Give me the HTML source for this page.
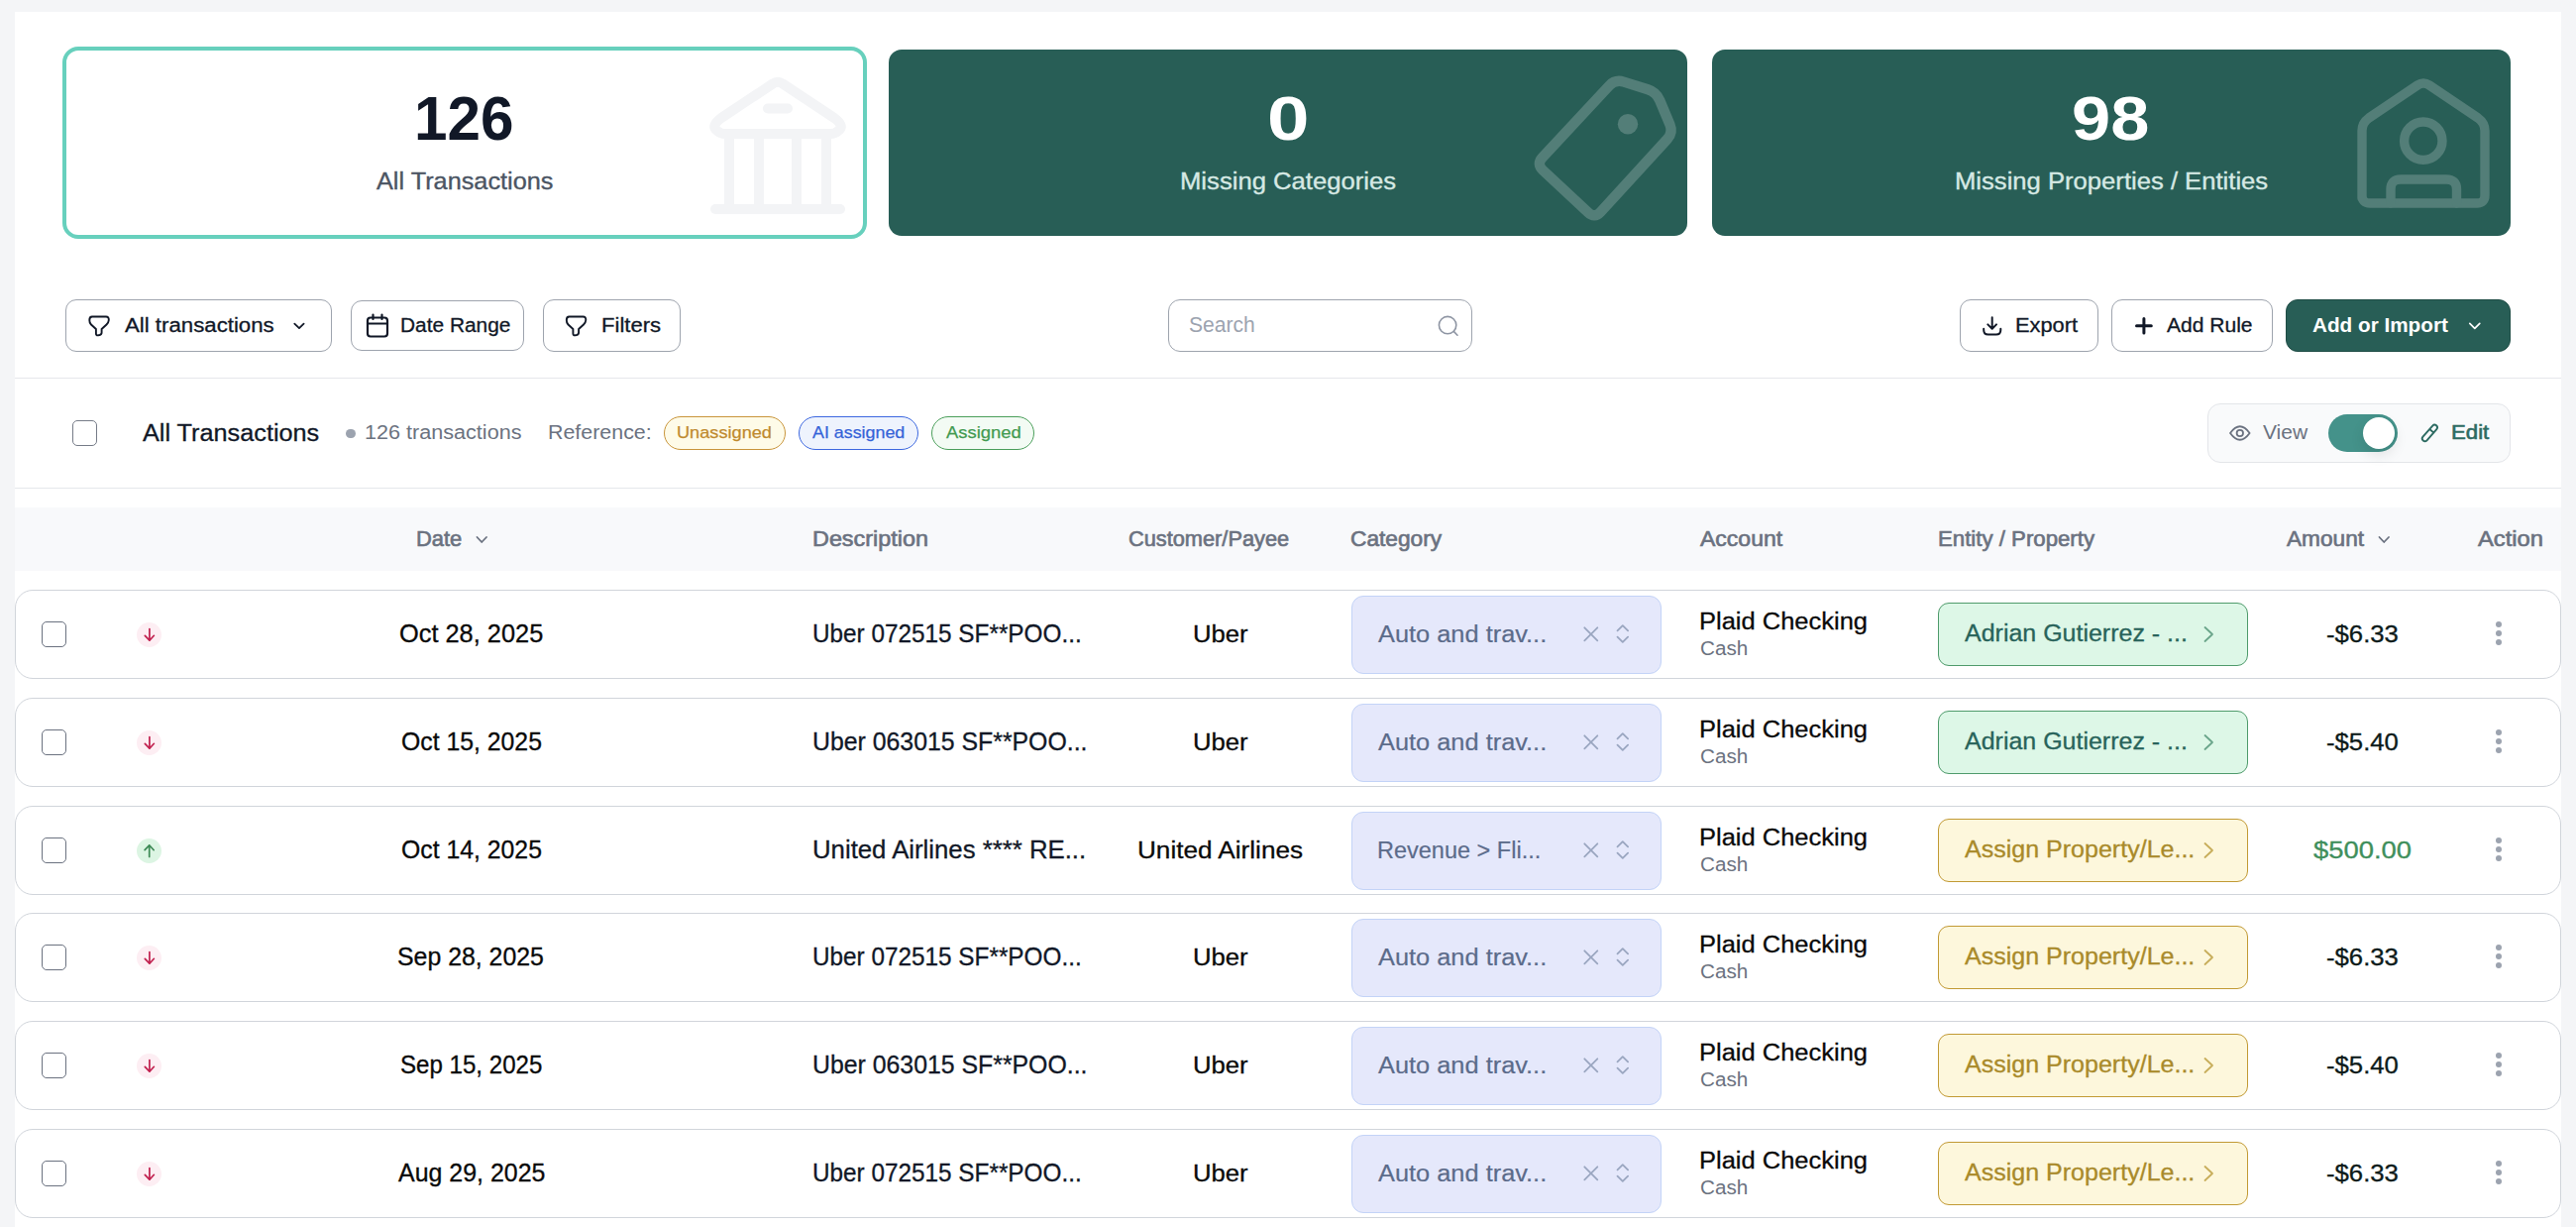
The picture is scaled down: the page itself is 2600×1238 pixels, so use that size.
<!DOCTYPE html>
<html><head><meta charset="utf-8"><title>Transactions</title>
<style>
html,body{margin:0;padding:0;width:2600px;height:1238px;overflow:hidden;background:#f4f5f7;font-family:"Liberation Sans",sans-serif}
.t{position:absolute;white-space:nowrap;transform-origin:0 0}
</style></head><body>
<div style="position:absolute;left:15px;top:12px;width:2570px;height:1226px;background:#fff"></div>
<div style="position:absolute;left:63px;top:47px;width:804px;height:186px;border:4px solid #67d0bd;border-radius:16px;background:#fff"></div>
<div style="position:absolute;left:897px;top:50px;width:806px;height:188px;border-radius:13px;background:#285e56"></div>
<div style="position:absolute;left:1728px;top:50px;width:806px;height:188px;border-radius:13px;background:#285e56"></div>
<svg style="position:absolute;left:0;top:0" width="2600" height="260" viewBox="0 0 2600 260">
<g fill="none" stroke-linecap="round" stroke-linejoin="round">
<g stroke="#f3f4f6" stroke-width="10">
<path d="M722,211 H848"/>
<path d="M736,140 V207 M766,140 V207 M804,140 V207 M834,140 V207"/>
<path d="M780,84.5 Q785,81 790,84.5 L842,119 Q853,127 846,132 Q843,135 838,135 H732 Q727,135 724,132 Q717,127 728,119 Z"/>
<path d="M775,109.5 H795"/>
</g>
<g stroke="#537e78" stroke-width="10.4">
<path d="M1556.8,158.9 L1624.2,86.5 Q1630.3,79.9 1638.9,82.6 L1663.2,90.2 Q1671.8,92.9 1675.2,101.2 L1685.4,125.5 Q1688.9,133.8 1682.8,140.4 L1615.4,213.9 Q1609.3,220.5 1602.8,214.3 L1557.2,171.7 Q1550.7,165.5 1556.8,158.9 Z"/>
<path d="M2384,200 V132 Q2384,124 2391,119 L2440,86 Q2446,82 2452,86 L2501,119 Q2508,124 2508,132 V197 Q2508,205 2500,205 H2392 Q2384,205 2384,197 Z" stroke-width="9.4"/>
<path d="M2413,205 V191 Q2413,181 2423,181 H2469 Q2479.5,181 2479.5,191 V205" stroke-width="9.4"/>
<circle cx="2445.8" cy="142.2" r="19.2" stroke-width="9.4"/>
</g>
<circle cx="1643" cy="125.3" r="10.2" fill="#537e78"/>
</g></svg>
<div style="position:absolute;box-sizing:border-box;border:1px solid #9ea4ae;border-radius:11px;background:#fff;left:66px;top:302px;width:269px;height:53px"></div>
<div style="position:absolute;box-sizing:border-box;border:1px solid #9ea4ae;border-radius:11px;background:#fff;left:354px;top:303px;width:175px;height:51px"></div>
<div style="position:absolute;box-sizing:border-box;border:1px solid #9ea4ae;border-radius:11px;background:#fff;left:548px;top:302px;width:139px;height:53px"></div>
<div style="position:absolute;box-sizing:border-box;border:1px solid #9ea4ae;border-radius:11px;background:#fff;left:1179px;top:302px;width:307px;height:53px;border-radius:12px"></div>
<div style="position:absolute;box-sizing:border-box;border:1px solid #9ea4ae;border-radius:11px;background:#fff;left:1978px;top:302px;width:140px;height:53px"></div>
<div style="position:absolute;box-sizing:border-box;border:1px solid #9ea4ae;border-radius:11px;background:#fff;left:2131px;top:302px;width:163px;height:53px"></div>
<div style="position:absolute;left:2307px;top:302px;width:227px;height:53px;border-radius:12px;background:#285e56;box-sizing:border-box;border:1px solid #1f4c45"></div>
<svg style="position:absolute;left:0;top:280px" width="2600" height="100" viewBox="0 280 2600 100">
<g fill="none" stroke-linecap="round" stroke-linejoin="round">
<g stroke="#111827" stroke-width="2.2">
<path d="M93,319.5 H107 Q110,319.5 109.8,323 Q109.6,325.5 107.5,327.5 L102.6,332 V335.5 Q102.6,337.5 100.5,338 L99,338.3 Q96.9,338.6 96.9,336.5 V332 L92,327.5 Q90.2,325.5 90.3,323 Q90.3,319.5 93,319.5 Z" stroke-width="1.9"/>
<path d="M297.3,326.6 L302,331.1 L306.6,326.6" stroke-width="1.8"/>
<rect x="371" y="320.5" width="20" height="19" rx="3"/>
<path d="M371,326.5 H391 M376.5,317.5 V322 M385.5,317.5 V322"/>
<g transform="translate(481.5,0)"><path d="M93,319.5 H107 Q110,319.5 109.8,323 Q109.6,325.5 107.5,327.5 L102.6,332 V335.5 Q102.6,337.5 100.5,338 L99,338.3 Q96.9,338.6 96.9,336.5 V332 L92,327.5 Q90.2,325.5 90.3,323 Q90.3,319.5 93,319.5 Z" stroke-width="1.9"/></g>
<path d="M2010.7,320.3 V331.6 M2006.3,327.4 L2010.7,331.8 L2015,327.4 M2002.2,331.7 V333 Q2002.2,337.6 2006.7,337.6 H2014.8 Q2019.3,337.6 2019.3,333 V331.7" stroke-width="2"/>
</g>
<path d="M2163.9,321.5 V336 M2156.5,328.7 H2171.3" stroke="#111827" stroke-width="3"/>
<path d="M2492.8,326.3 L2497.8,331.3 L2502.8,326.3" stroke="#ffffff" stroke-width="1.7"/>
<g stroke="#8e95a3" stroke-width="1.6">
<circle cx="1461.1" cy="328.1" r="8.7"/><path d="M1467.3,334.4 L1471,338.2"/>
</g>
</g></svg>
<div style="position:absolute;left:15px;top:381px;width:2570px;height:1px;background:#e5e7eb"></div>
<div style="position:absolute;left:15px;top:492px;width:2570px;height:1px;background:#e5e7eb"></div>
<div style="position:absolute;left:15px;top:512px;width:2570px;height:64px;background:#f8f9fb"></div>
<div style="position:absolute;box-sizing:border-box;left:73px;top:424px;width:25px;height:26px;border:1.5px solid #767c88;border-radius:5px"></div>
<div style="position:absolute;left:349px;top:432.5px;width:9.5px;height:9.5px;border-radius:50%;background:#9ca3af"></div>
<div style="position:absolute;box-sizing:border-box;border-radius:17px;border:1.5px solid;left:670px;top:420px;width:123px;height:34px;border-color:#c9953b;background:#fefbe8"></div>
<div style="position:absolute;box-sizing:border-box;border-radius:17px;border:1.5px solid;left:806px;top:420px;width:121px;height:34px;border-color:#3d68e0;background:#eef3fd"></div>
<div style="position:absolute;box-sizing:border-box;border-radius:17px;border:1.5px solid;left:940px;top:420px;width:104px;height:34px;border-color:#4b9f5b;background:#f3fbf4"></div>
<div style="position:absolute;box-sizing:border-box;left:2228px;top:407px;width:306px;height:60px;border:1px solid #e3e5e9;border-radius:13px;background:#f9fafb"></div>
<div style="position:absolute;left:2350px;top:418px;width:70px;height:38px;border-radius:19px;background:#44928a"></div>
<div style="position:absolute;left:2385px;top:421px;width:32px;height:32px;border-radius:50%;background:#fff;box-shadow:0 6px 14px rgba(0,0,0,0.10)"></div>
<svg style="position:absolute;left:2240px;top:415px" width="240" height="45" viewBox="2240 415 240 45">
<g fill="none" stroke-linecap="round" stroke-linejoin="round">
<path d="M2251,437 Q2260.8,423.5 2270.6,437 Q2260.8,450.5 2251,437 Z" stroke="#6b7280" stroke-width="1.8"/>
<circle cx="2260.8" cy="437" r="3.2" stroke="#6b7280" stroke-width="1.8"/>
<path d="M2449.53,444.28 L2459.33,433.08 A2.7,2.7 0 0 0 2455.27,429.52 L2445.47,440.72 A2.7,2.7 0 0 0 2449.53,444.28 Z M2452.3,433.0 L2456.4,436.6" stroke="#2d6b62" stroke-width="1.9"/>
</g></svg>
<svg style="position:absolute;left:470px;top:530px" width="1960" height="30" viewBox="470 530 1960 30">
<g fill="none" stroke="#6b7280" stroke-width="1.8" stroke-linecap="round" stroke-linejoin="round">
<path d="M481.5,542 L486.2,547 L491,542"/><path d="M2401.5,542 L2406.2,547 L2411,542"/>
</g></svg>
<div style="position:absolute;box-sizing:border-box;left:15px;top:595px;width:2570px;height:90px;border:1px solid #d1d5db;border-radius:18px;background:#fff"></div>
<div style="position:absolute;box-sizing:border-box;left:42px;top:627px;width:25px;height:26px;border:1.5px solid #6b7280;border-radius:5px"></div>
<div style="position:absolute;left:138px;top:627.5px;width:25px;height:25px;border-radius:50%;background:#fdeef3"></div>
<svg style="position:absolute;left:138px;top:627.5px" width="25" height="25" viewBox="0 0 25 25"><path d="M12.9,6.6 V18.2 M8.3,13.3 L12.9,18.2 L17.4,13.3" fill="none" stroke="#c1214f" stroke-width="1.7" stroke-linecap="round" stroke-linejoin="round"/></svg>
<div style="position:absolute;box-sizing:border-box;left:1364px;top:601px;width:313px;height:79px;border:1.5px solid #c3d3f7;border-radius:12px;background:#e5e8fb"></div>
<svg style="position:absolute;left:1590px;top:625px" width="60" height="30" viewBox="1590 625 60 30"><g fill="none" stroke-linecap="round" stroke-linejoin="round">
<path d="M1599.3,633.3 L1612.3,646.3 M1612.3,633.3 L1599.3,646.3" stroke="#9aa6c0" stroke-width="1.8"/>
<path d="M1632.5,636.4 L1637.8,631.1 L1643.1,636.4 M1632.5,642.6 L1637.8,647.9 L1643.1,642.6" stroke="#9aa6c0" stroke-width="1.8"/></g></svg>
<div style="position:absolute;box-sizing:border-box;left:1956px;top:608px;width:313px;height:64px;border:1.5px solid #4f9b6c;border-radius:11px;background:#ddf7e7"></div>
<svg style="position:absolute;left:2220px;top:628px" width="20" height="24" viewBox="2220 628 20 24"><path d="M2225.5,633 L2233,640 L2225.5,647" fill="none" stroke="#6aa58a" stroke-width="1.8" stroke-linecap="round" stroke-linejoin="round"/></svg>
<div style="position:absolute;left:2519px;top:626.5px;width:6px;height:6px;border-radius:50%;background:#9ca3af"></div>
<div style="position:absolute;left:2519px;top:635.9px;width:6px;height:6px;border-radius:50%;background:#9ca3af"></div>
<div style="position:absolute;left:2519px;top:645.4px;width:6px;height:6px;border-radius:50%;background:#9ca3af"></div>
<div style="position:absolute;box-sizing:border-box;left:15px;top:704px;width:2570px;height:90px;border:1px solid #d1d5db;border-radius:18px;background:#fff"></div>
<div style="position:absolute;box-sizing:border-box;left:42px;top:736px;width:25px;height:26px;border:1.5px solid #6b7280;border-radius:5px"></div>
<div style="position:absolute;left:138px;top:736.5px;width:25px;height:25px;border-radius:50%;background:#fdeef3"></div>
<svg style="position:absolute;left:138px;top:736.5px" width="25" height="25" viewBox="0 0 25 25"><path d="M12.9,6.6 V18.2 M8.3,13.3 L12.9,18.2 L17.4,13.3" fill="none" stroke="#c1214f" stroke-width="1.7" stroke-linecap="round" stroke-linejoin="round"/></svg>
<div style="position:absolute;box-sizing:border-box;left:1364px;top:710px;width:313px;height:79px;border:1.5px solid #c3d3f7;border-radius:12px;background:#e5e8fb"></div>
<svg style="position:absolute;left:1590px;top:734px" width="60" height="30" viewBox="1590 625 60 30"><g fill="none" stroke-linecap="round" stroke-linejoin="round">
<path d="M1599.3,633.3 L1612.3,646.3 M1612.3,633.3 L1599.3,646.3" stroke="#9aa6c0" stroke-width="1.8"/>
<path d="M1632.5,636.4 L1637.8,631.1 L1643.1,636.4 M1632.5,642.6 L1637.8,647.9 L1643.1,642.6" stroke="#9aa6c0" stroke-width="1.8"/></g></svg>
<div style="position:absolute;box-sizing:border-box;left:1956px;top:717px;width:313px;height:64px;border:1.5px solid #4f9b6c;border-radius:11px;background:#ddf7e7"></div>
<svg style="position:absolute;left:2220px;top:737px" width="20" height="24" viewBox="2220 628 20 24"><path d="M2225.5,633 L2233,640 L2225.5,647" fill="none" stroke="#6aa58a" stroke-width="1.8" stroke-linecap="round" stroke-linejoin="round"/></svg>
<div style="position:absolute;left:2519px;top:735.5px;width:6px;height:6px;border-radius:50%;background:#9ca3af"></div>
<div style="position:absolute;left:2519px;top:744.9px;width:6px;height:6px;border-radius:50%;background:#9ca3af"></div>
<div style="position:absolute;left:2519px;top:754.4px;width:6px;height:6px;border-radius:50%;background:#9ca3af"></div>
<div style="position:absolute;box-sizing:border-box;left:15px;top:813px;width:2570px;height:90px;border:1px solid #d1d5db;border-radius:18px;background:#fff"></div>
<div style="position:absolute;box-sizing:border-box;left:42px;top:845px;width:25px;height:26px;border:1.5px solid #6b7280;border-radius:5px"></div>
<div style="position:absolute;left:138px;top:845.5px;width:25px;height:25px;border-radius:50%;background:#dcf5e3"></div>
<svg style="position:absolute;left:138px;top:845.5px" width="25" height="25" viewBox="0 0 25 25"><path d="M12.7,18.4 V6.8 M8.1,11.7 L12.7,6.8 L17.2,11.7" fill="none" stroke="#3d8a55" stroke-width="1.7" stroke-linecap="round" stroke-linejoin="round"/></svg>
<div style="position:absolute;box-sizing:border-box;left:1364px;top:819px;width:313px;height:79px;border:1.5px solid #c3d3f7;border-radius:12px;background:#e5e8fb"></div>
<svg style="position:absolute;left:1590px;top:843px" width="60" height="30" viewBox="1590 625 60 30"><g fill="none" stroke-linecap="round" stroke-linejoin="round">
<path d="M1599.3,633.3 L1612.3,646.3 M1612.3,633.3 L1599.3,646.3" stroke="#9aa6c0" stroke-width="1.8"/>
<path d="M1632.5,636.4 L1637.8,631.1 L1643.1,636.4 M1632.5,642.6 L1637.8,647.9 L1643.1,642.6" stroke="#9aa6c0" stroke-width="1.8"/></g></svg>
<div style="position:absolute;box-sizing:border-box;left:1956px;top:826px;width:313px;height:64px;border:1.5px solid #c29a35;border-radius:11px;background:#fdf7dc"></div>
<svg style="position:absolute;left:2220px;top:846px" width="20" height="24" viewBox="2220 628 20 24"><path d="M2225.5,633 L2233,640 L2225.5,647" fill="none" stroke="#c7ad5a" stroke-width="1.8" stroke-linecap="round" stroke-linejoin="round"/></svg>
<div style="position:absolute;left:2519px;top:844.5px;width:6px;height:6px;border-radius:50%;background:#9ca3af"></div>
<div style="position:absolute;left:2519px;top:853.9px;width:6px;height:6px;border-radius:50%;background:#9ca3af"></div>
<div style="position:absolute;left:2519px;top:863.4px;width:6px;height:6px;border-radius:50%;background:#9ca3af"></div>
<div style="position:absolute;box-sizing:border-box;left:15px;top:921px;width:2570px;height:90px;border:1px solid #d1d5db;border-radius:18px;background:#fff"></div>
<div style="position:absolute;box-sizing:border-box;left:42px;top:953px;width:25px;height:26px;border:1.5px solid #6b7280;border-radius:5px"></div>
<div style="position:absolute;left:138px;top:953.5px;width:25px;height:25px;border-radius:50%;background:#fdeef3"></div>
<svg style="position:absolute;left:138px;top:953.5px" width="25" height="25" viewBox="0 0 25 25"><path d="M12.9,6.6 V18.2 M8.3,13.3 L12.9,18.2 L17.4,13.3" fill="none" stroke="#c1214f" stroke-width="1.7" stroke-linecap="round" stroke-linejoin="round"/></svg>
<div style="position:absolute;box-sizing:border-box;left:1364px;top:927px;width:313px;height:79px;border:1.5px solid #c3d3f7;border-radius:12px;background:#e5e8fb"></div>
<svg style="position:absolute;left:1590px;top:951px" width="60" height="30" viewBox="1590 625 60 30"><g fill="none" stroke-linecap="round" stroke-linejoin="round">
<path d="M1599.3,633.3 L1612.3,646.3 M1612.3,633.3 L1599.3,646.3" stroke="#9aa6c0" stroke-width="1.8"/>
<path d="M1632.5,636.4 L1637.8,631.1 L1643.1,636.4 M1632.5,642.6 L1637.8,647.9 L1643.1,642.6" stroke="#9aa6c0" stroke-width="1.8"/></g></svg>
<div style="position:absolute;box-sizing:border-box;left:1956px;top:934px;width:313px;height:64px;border:1.5px solid #c29a35;border-radius:11px;background:#fdf7dc"></div>
<svg style="position:absolute;left:2220px;top:954px" width="20" height="24" viewBox="2220 628 20 24"><path d="M2225.5,633 L2233,640 L2225.5,647" fill="none" stroke="#c7ad5a" stroke-width="1.8" stroke-linecap="round" stroke-linejoin="round"/></svg>
<div style="position:absolute;left:2519px;top:952.5px;width:6px;height:6px;border-radius:50%;background:#9ca3af"></div>
<div style="position:absolute;left:2519px;top:961.9px;width:6px;height:6px;border-radius:50%;background:#9ca3af"></div>
<div style="position:absolute;left:2519px;top:971.4px;width:6px;height:6px;border-radius:50%;background:#9ca3af"></div>
<div style="position:absolute;box-sizing:border-box;left:15px;top:1030px;width:2570px;height:90px;border:1px solid #d1d5db;border-radius:18px;background:#fff"></div>
<div style="position:absolute;box-sizing:border-box;left:42px;top:1062px;width:25px;height:26px;border:1.5px solid #6b7280;border-radius:5px"></div>
<div style="position:absolute;left:138px;top:1062.5px;width:25px;height:25px;border-radius:50%;background:#fdeef3"></div>
<svg style="position:absolute;left:138px;top:1062.5px" width="25" height="25" viewBox="0 0 25 25"><path d="M12.9,6.6 V18.2 M8.3,13.3 L12.9,18.2 L17.4,13.3" fill="none" stroke="#c1214f" stroke-width="1.7" stroke-linecap="round" stroke-linejoin="round"/></svg>
<div style="position:absolute;box-sizing:border-box;left:1364px;top:1036px;width:313px;height:79px;border:1.5px solid #c3d3f7;border-radius:12px;background:#e5e8fb"></div>
<svg style="position:absolute;left:1590px;top:1060px" width="60" height="30" viewBox="1590 625 60 30"><g fill="none" stroke-linecap="round" stroke-linejoin="round">
<path d="M1599.3,633.3 L1612.3,646.3 M1612.3,633.3 L1599.3,646.3" stroke="#9aa6c0" stroke-width="1.8"/>
<path d="M1632.5,636.4 L1637.8,631.1 L1643.1,636.4 M1632.5,642.6 L1637.8,647.9 L1643.1,642.6" stroke="#9aa6c0" stroke-width="1.8"/></g></svg>
<div style="position:absolute;box-sizing:border-box;left:1956px;top:1043px;width:313px;height:64px;border:1.5px solid #c29a35;border-radius:11px;background:#fdf7dc"></div>
<svg style="position:absolute;left:2220px;top:1063px" width="20" height="24" viewBox="2220 628 20 24"><path d="M2225.5,633 L2233,640 L2225.5,647" fill="none" stroke="#c7ad5a" stroke-width="1.8" stroke-linecap="round" stroke-linejoin="round"/></svg>
<div style="position:absolute;left:2519px;top:1061.5px;width:6px;height:6px;border-radius:50%;background:#9ca3af"></div>
<div style="position:absolute;left:2519px;top:1070.9px;width:6px;height:6px;border-radius:50%;background:#9ca3af"></div>
<div style="position:absolute;left:2519px;top:1080.4px;width:6px;height:6px;border-radius:50%;background:#9ca3af"></div>
<div style="position:absolute;box-sizing:border-box;left:15px;top:1139px;width:2570px;height:90px;border:1px solid #d1d5db;border-radius:18px;background:#fff"></div>
<div style="position:absolute;box-sizing:border-box;left:42px;top:1171px;width:25px;height:26px;border:1.5px solid #6b7280;border-radius:5px"></div>
<div style="position:absolute;left:138px;top:1171.5px;width:25px;height:25px;border-radius:50%;background:#fdeef3"></div>
<svg style="position:absolute;left:138px;top:1171.5px" width="25" height="25" viewBox="0 0 25 25"><path d="M12.9,6.6 V18.2 M8.3,13.3 L12.9,18.2 L17.4,13.3" fill="none" stroke="#c1214f" stroke-width="1.7" stroke-linecap="round" stroke-linejoin="round"/></svg>
<div style="position:absolute;box-sizing:border-box;left:1364px;top:1145px;width:313px;height:79px;border:1.5px solid #c3d3f7;border-radius:12px;background:#e5e8fb"></div>
<svg style="position:absolute;left:1590px;top:1169px" width="60" height="30" viewBox="1590 625 60 30"><g fill="none" stroke-linecap="round" stroke-linejoin="round">
<path d="M1599.3,633.3 L1612.3,646.3 M1612.3,633.3 L1599.3,646.3" stroke="#9aa6c0" stroke-width="1.8"/>
<path d="M1632.5,636.4 L1637.8,631.1 L1643.1,636.4 M1632.5,642.6 L1637.8,647.9 L1643.1,642.6" stroke="#9aa6c0" stroke-width="1.8"/></g></svg>
<div style="position:absolute;box-sizing:border-box;left:1956px;top:1152px;width:313px;height:64px;border:1.5px solid #c29a35;border-radius:11px;background:#fdf7dc"></div>
<svg style="position:absolute;left:2220px;top:1172px" width="20" height="24" viewBox="2220 628 20 24"><path d="M2225.5,633 L2233,640 L2225.5,647" fill="none" stroke="#c7ad5a" stroke-width="1.8" stroke-linecap="round" stroke-linejoin="round"/></svg>
<div style="position:absolute;left:2519px;top:1170.5px;width:6px;height:6px;border-radius:50%;background:#9ca3af"></div>
<div style="position:absolute;left:2519px;top:1179.9px;width:6px;height:6px;border-radius:50%;background:#9ca3af"></div>
<div style="position:absolute;left:2519px;top:1189.4px;width:6px;height:6px;border-radius:50%;background:#9ca3af"></div>
<div class="t" style="left:418.10px;top:88.63px;font-size:62.32px;line-height:62.32px;font-weight:700;transform:scaleX(0.9668);color:#111827;">126</div>
<div class="t" style="left:379.50px;top:170.93px;font-size:24.20px;line-height:24.20px;font-weight:400;transform:scaleX(1.0452);color:#4b5563;-webkit-text-stroke:0.35px #4b5563;">All Transactions</div>
<div class="t" style="left:1278.55px;top:88.63px;font-size:62.32px;line-height:62.32px;font-weight:700;transform:scaleX(1.2258);color:#ffffff;">0</div>
<div class="t" style="left:1190.94px;top:170.93px;font-size:24.20px;line-height:24.20px;font-weight:400;transform:scaleX(1.0602);color:#d6e9e4;-webkit-text-stroke:0.35px #d6e9e4;">Missing Categories</div>
<div class="t" style="left:2091.14px;top:88.63px;font-size:62.32px;line-height:62.32px;font-weight:700;transform:scaleX(1.1303);color:#ffffff;">98</div>
<div class="t" style="left:1972.74px;top:170.93px;font-size:24.20px;line-height:24.20px;font-weight:400;transform:scaleX(1.0594);color:#d6e9e4;-webkit-text-stroke:0.35px #d6e9e4;">Missing Properties / Entities</div>
<div class="t" style="left:125.50px;top:318.18px;font-size:20.72px;line-height:20.72px;font-weight:400;transform:scaleX(1.0726);color:#111827;-webkit-text-stroke:0.3px #111827;">All transactions</div>
<div class="t" style="left:403.79px;top:318.18px;font-size:20.72px;line-height:20.72px;font-weight:400;transform:scaleX(1.0078);color:#111827;-webkit-text-stroke:0.3px #111827;">Date Range</div>
<div class="t" style="left:606.54px;top:318.18px;font-size:20.72px;line-height:20.72px;font-weight:400;transform:scaleX(1.0647);color:#111827;-webkit-text-stroke:0.3px #111827;">Filters</div>
<div class="t" style="left:1199.90px;top:317.44px;font-size:21.59px;line-height:21.59px;font-weight:400;transform:scaleX(0.9752);color:#9ca3af;">Search</div>
<div class="t" style="left:2033.72px;top:318.45px;font-size:20.29px;line-height:20.29px;font-weight:400;transform:scaleX(1.0753);color:#111827;-webkit-text-stroke:0.3px #111827;">Export</div>
<div class="t" style="left:2186.80px;top:318.45px;font-size:20.29px;line-height:20.29px;font-weight:400;transform:scaleX(1.0373);color:#111827;-webkit-text-stroke:0.3px #111827;">Add Rule</div>
<div class="t" style="left:2334.00px;top:318.45px;font-size:20.29px;line-height:20.29px;font-weight:700;transform:scaleX(1.0208);color:#ffffff;">Add or Import</div>
<div class="t" style="left:144.00px;top:424.90px;font-size:24.35px;line-height:24.35px;font-weight:400;transform:scaleX(1.0372);color:#111827;-webkit-text-stroke:0.3px #111827;">All Transactions</div>
<div class="t" style="left:367.95px;top:426.31px;font-size:20.58px;line-height:20.58px;font-weight:400;transform:scaleX(1.0494);color:#6b7280;">126 transactions</div>
<div class="t" style="left:552.66px;top:426.31px;font-size:20.58px;line-height:20.58px;font-weight:400;transform:scaleX(1.0401);color:#6b7280;">Reference:</div>
<div class="t" style="left:683.15px;top:427.92px;font-size:17.39px;line-height:17.39px;font-weight:400;transform:scaleX(1.0455);color:#bf8a2e;-webkit-text-stroke:0.25px #bf8a2e;">Unassigned</div>
<div class="t" style="left:820.20px;top:427.92px;font-size:17.39px;line-height:17.39px;font-weight:400;transform:scaleX(1.0274);color:#3563d8;-webkit-text-stroke:0.25px #3563d8;">AI assigned</div>
<div class="t" style="left:954.50px;top:427.92px;font-size:17.39px;line-height:17.39px;font-weight:400;transform:scaleX(1.0577);color:#429a50;-webkit-text-stroke:0.25px #429a50;">Assigned</div>
<div class="t" style="left:2284.00px;top:426.40px;font-size:20.00px;line-height:20.00px;font-weight:400;transform:scaleX(1.0495);color:#6b7280;">View</div>
<div class="t" style="left:2474.29px;top:426.40px;font-size:20.00px;line-height:20.00px;font-weight:400;transform:scaleX(1.1089);color:#2d6b62;-webkit-text-stroke:0.6px #2d6b62;">Edit</div>
<div class="t" style="left:420.31px;top:533.38px;font-size:22.03px;line-height:22.03px;font-weight:400;transform:scaleX(0.9943);color:#6b7280;-webkit-text-stroke:0.65px #6b7280;">Date</div>
<div class="t" style="left:819.64px;top:533.38px;font-size:22.03px;line-height:22.03px;font-weight:400;transform:scaleX(1.0614);color:#6b7280;-webkit-text-stroke:0.65px #6b7280;">Description</div>
<div class="t" style="left:1139.41px;top:533.38px;font-size:22.03px;line-height:22.03px;font-weight:400;transform:scaleX(0.9888);color:#6b7280;-webkit-text-stroke:0.65px #6b7280;">Customer/Payee</div>
<div class="t" style="left:1362.97px;top:533.38px;font-size:22.03px;line-height:22.03px;font-weight:400;transform:scaleX(1.0303);color:#6b7280;-webkit-text-stroke:0.65px #6b7280;">Category</div>
<div class="t" style="left:1716.00px;top:533.38px;font-size:22.03px;line-height:22.03px;font-weight:400;transform:scaleX(1.0449);color:#6b7280;-webkit-text-stroke:0.65px #6b7280;">Account</div>
<div class="t" style="left:1955.69px;top:533.38px;font-size:22.03px;line-height:22.03px;font-weight:400;transform:scaleX(1.0090);color:#6b7280;-webkit-text-stroke:0.65px #6b7280;">Entity / Property</div>
<div class="t" style="left:2308.40px;top:533.38px;font-size:22.03px;line-height:22.03px;font-weight:400;transform:scaleX(1.0283);color:#6b7280;-webkit-text-stroke:0.65px #6b7280;">Amount</div>
<div class="t" style="left:2500.60px;top:533.38px;font-size:22.03px;line-height:22.03px;font-weight:400;transform:scaleX(1.0777);color:#6b7280;-webkit-text-stroke:0.65px #6b7280;">Action</div>
<div class="t" style="left:402.84px;top:627.29px;font-size:25.07px;line-height:25.07px;font-weight:400;transform:scaleX(1.0122);color:#0a0a0a;-webkit-text-stroke:0.3px #0a0a0a;">Oct 28, 2025</div>
<div class="t" style="left:819.83px;top:627.29px;font-size:25.07px;line-height:25.07px;font-weight:400;transform:scaleX(0.9702);color:#111827;-webkit-text-stroke:0.3px #111827;">Uber 072515 SF**POO...</div>
<div class="t" style="left:1204.16px;top:627.66px;font-size:24.64px;line-height:24.64px;font-weight:400;transform:scaleX(1.0427);color:#0a0a0a;-webkit-text-stroke:0.3px #0a0a0a;">Uber</div>
<div class="t" style="left:1391.20px;top:627.66px;font-size:24.64px;line-height:24.64px;font-weight:400;transform:scaleX(1.0304);color:#5b6b8a;-webkit-text-stroke:0.2px #5b6b8a;">Auto and trav...</div>
<div class="t" style="left:1715.22px;top:614.68px;font-size:24.49px;line-height:24.49px;font-weight:400;transform:scaleX(1.0410);color:#0a0a0a;-webkit-text-stroke:0.3px #0a0a0a;">Plaid Checking</div>
<div class="t" style="left:1716.24px;top:645.47px;font-size:19.57px;line-height:19.57px;font-weight:400;transform:scaleX(1.0557);color:#6b7280;">Cash</div>
<div class="t" style="left:1983.30px;top:628.34px;font-size:23.48px;line-height:23.48px;font-weight:400;transform:scaleX(1.0645);color:#28635a;-webkit-text-stroke:0.3px #28635a;">Adrian Gutierrez - ...</div>
<div class="t" style="left:2347.67px;top:628.30px;font-size:23.77px;line-height:23.77px;font-weight:400;transform:scaleX(1.0811);color:#0d1b1a;-webkit-text-stroke:0.3px #0d1b1a;">-$6.33</div>
<div class="t" style="left:404.71px;top:736.29px;font-size:25.07px;line-height:25.07px;font-weight:400;transform:scaleX(0.9889);color:#0a0a0a;-webkit-text-stroke:0.3px #0a0a0a;">Oct 15, 2025</div>
<div class="t" style="left:819.51px;top:736.29px;font-size:25.07px;line-height:25.07px;font-weight:400;transform:scaleX(0.9908);color:#111827;-webkit-text-stroke:0.3px #111827;">Uber 063015 SF**POO...</div>
<div class="t" style="left:1204.16px;top:736.66px;font-size:24.64px;line-height:24.64px;font-weight:400;transform:scaleX(1.0427);color:#0a0a0a;-webkit-text-stroke:0.3px #0a0a0a;">Uber</div>
<div class="t" style="left:1391.20px;top:736.66px;font-size:24.64px;line-height:24.64px;font-weight:400;transform:scaleX(1.0304);color:#5b6b8a;-webkit-text-stroke:0.2px #5b6b8a;">Auto and trav...</div>
<div class="t" style="left:1715.22px;top:723.68px;font-size:24.49px;line-height:24.49px;font-weight:400;transform:scaleX(1.0410);color:#0a0a0a;-webkit-text-stroke:0.3px #0a0a0a;">Plaid Checking</div>
<div class="t" style="left:1716.24px;top:754.47px;font-size:19.57px;line-height:19.57px;font-weight:400;transform:scaleX(1.0557);color:#6b7280;">Cash</div>
<div class="t" style="left:1983.30px;top:737.34px;font-size:23.48px;line-height:23.48px;font-weight:400;transform:scaleX(1.0645);color:#28635a;-webkit-text-stroke:0.3px #28635a;">Adrian Gutierrez - ...</div>
<div class="t" style="left:2347.67px;top:737.30px;font-size:23.77px;line-height:23.77px;font-weight:400;transform:scaleX(1.0811);color:#0d1b1a;-webkit-text-stroke:0.3px #0d1b1a;">-$5.40</div>
<div class="t" style="left:404.71px;top:845.29px;font-size:25.07px;line-height:25.07px;font-weight:400;transform:scaleX(0.9889);color:#0a0a0a;-webkit-text-stroke:0.3px #0a0a0a;">Oct 14, 2025</div>
<div class="t" style="left:820.17px;top:845.29px;font-size:25.07px;line-height:25.07px;font-weight:400;transform:scaleX(1.0271);color:#111827;-webkit-text-stroke:0.3px #111827;">United Airlines **** RE...</div>
<div class="t" style="left:1148.34px;top:845.66px;font-size:24.64px;line-height:24.64px;font-weight:400;transform:scaleX(1.0613);color:#0a0a0a;-webkit-text-stroke:0.3px #0a0a0a;">United Airlines</div>
<div class="t" style="left:1389.99px;top:845.66px;font-size:24.64px;line-height:24.64px;font-weight:400;transform:scaleX(0.9545);color:#5b6b8a;-webkit-text-stroke:0.2px #5b6b8a;">Revenue &gt; Fli...</div>
<div class="t" style="left:1715.22px;top:832.68px;font-size:24.49px;line-height:24.49px;font-weight:400;transform:scaleX(1.0410);color:#0a0a0a;-webkit-text-stroke:0.3px #0a0a0a;">Plaid Checking</div>
<div class="t" style="left:1716.24px;top:863.47px;font-size:19.57px;line-height:19.57px;font-weight:400;transform:scaleX(1.0557);color:#6b7280;">Cash</div>
<div class="t" style="left:1983.30px;top:846.34px;font-size:23.48px;line-height:23.48px;font-weight:400;transform:scaleX(1.0665);color:#a98a2a;-webkit-text-stroke:0.3px #a98a2a;">Assign Property/Le...</div>
<div class="t" style="left:2334.80px;top:846.30px;font-size:23.77px;line-height:23.77px;font-weight:400;transform:scaleX(1.1536);color:#3f8f5c;-webkit-text-stroke:0.3px #3f8f5c;">$500.00</div>
<div class="t" style="left:401.21px;top:953.29px;font-size:25.07px;line-height:25.07px;font-weight:400;transform:scaleX(0.9920);color:#0a0a0a;-webkit-text-stroke:0.3px #0a0a0a;">Sep 28, 2025</div>
<div class="t" style="left:819.83px;top:953.29px;font-size:25.07px;line-height:25.07px;font-weight:400;transform:scaleX(0.9702);color:#111827;-webkit-text-stroke:0.3px #111827;">Uber 072515 SF**POO...</div>
<div class="t" style="left:1204.16px;top:953.66px;font-size:24.64px;line-height:24.64px;font-weight:400;transform:scaleX(1.0427);color:#0a0a0a;-webkit-text-stroke:0.3px #0a0a0a;">Uber</div>
<div class="t" style="left:1391.20px;top:953.66px;font-size:24.64px;line-height:24.64px;font-weight:400;transform:scaleX(1.0304);color:#5b6b8a;-webkit-text-stroke:0.2px #5b6b8a;">Auto and trav...</div>
<div class="t" style="left:1715.22px;top:940.68px;font-size:24.49px;line-height:24.49px;font-weight:400;transform:scaleX(1.0410);color:#0a0a0a;-webkit-text-stroke:0.3px #0a0a0a;">Plaid Checking</div>
<div class="t" style="left:1716.24px;top:971.47px;font-size:19.57px;line-height:19.57px;font-weight:400;transform:scaleX(1.0557);color:#6b7280;">Cash</div>
<div class="t" style="left:1983.30px;top:954.34px;font-size:23.48px;line-height:23.48px;font-weight:400;transform:scaleX(1.0665);color:#a98a2a;-webkit-text-stroke:0.3px #a98a2a;">Assign Property/Le...</div>
<div class="t" style="left:2347.67px;top:954.30px;font-size:23.77px;line-height:23.77px;font-weight:400;transform:scaleX(1.0811);color:#0d1b1a;-webkit-text-stroke:0.3px #0d1b1a;">-$6.33</div>
<div class="t" style="left:403.74px;top:1062.29px;font-size:25.07px;line-height:25.07px;font-weight:400;transform:scaleX(0.9614);color:#0a0a0a;-webkit-text-stroke:0.3px #0a0a0a;">Sep 15, 2025</div>
<div class="t" style="left:819.51px;top:1062.29px;font-size:25.07px;line-height:25.07px;font-weight:400;transform:scaleX(0.9908);color:#111827;-webkit-text-stroke:0.3px #111827;">Uber 063015 SF**POO...</div>
<div class="t" style="left:1204.16px;top:1062.66px;font-size:24.64px;line-height:24.64px;font-weight:400;transform:scaleX(1.0427);color:#0a0a0a;-webkit-text-stroke:0.3px #0a0a0a;">Uber</div>
<div class="t" style="left:1391.20px;top:1062.66px;font-size:24.64px;line-height:24.64px;font-weight:400;transform:scaleX(1.0304);color:#5b6b8a;-webkit-text-stroke:0.2px #5b6b8a;">Auto and trav...</div>
<div class="t" style="left:1715.22px;top:1049.68px;font-size:24.49px;line-height:24.49px;font-weight:400;transform:scaleX(1.0410);color:#0a0a0a;-webkit-text-stroke:0.3px #0a0a0a;">Plaid Checking</div>
<div class="t" style="left:1716.24px;top:1080.47px;font-size:19.57px;line-height:19.57px;font-weight:400;transform:scaleX(1.0557);color:#6b7280;">Cash</div>
<div class="t" style="left:1983.30px;top:1063.34px;font-size:23.48px;line-height:23.48px;font-weight:400;transform:scaleX(1.0665);color:#a98a2a;-webkit-text-stroke:0.3px #a98a2a;">Assign Property/Le...</div>
<div class="t" style="left:2347.67px;top:1063.30px;font-size:23.77px;line-height:23.77px;font-weight:400;transform:scaleX(1.0811);color:#0d1b1a;-webkit-text-stroke:0.3px #0d1b1a;">-$5.40</div>
<div class="t" style="left:401.70px;top:1171.29px;font-size:25.07px;line-height:25.07px;font-weight:400;transform:scaleX(0.9954);color:#0a0a0a;-webkit-text-stroke:0.3px #0a0a0a;">Aug 29, 2025</div>
<div class="t" style="left:819.83px;top:1171.29px;font-size:25.07px;line-height:25.07px;font-weight:400;transform:scaleX(0.9702);color:#111827;-webkit-text-stroke:0.3px #111827;">Uber 072515 SF**POO...</div>
<div class="t" style="left:1204.16px;top:1171.66px;font-size:24.64px;line-height:24.64px;font-weight:400;transform:scaleX(1.0427);color:#0a0a0a;-webkit-text-stroke:0.3px #0a0a0a;">Uber</div>
<div class="t" style="left:1391.20px;top:1171.66px;font-size:24.64px;line-height:24.64px;font-weight:400;transform:scaleX(1.0304);color:#5b6b8a;-webkit-text-stroke:0.2px #5b6b8a;">Auto and trav...</div>
<div class="t" style="left:1715.22px;top:1158.68px;font-size:24.49px;line-height:24.49px;font-weight:400;transform:scaleX(1.0410);color:#0a0a0a;-webkit-text-stroke:0.3px #0a0a0a;">Plaid Checking</div>
<div class="t" style="left:1716.24px;top:1189.47px;font-size:19.57px;line-height:19.57px;font-weight:400;transform:scaleX(1.0557);color:#6b7280;">Cash</div>
<div class="t" style="left:1983.30px;top:1172.34px;font-size:23.48px;line-height:23.48px;font-weight:400;transform:scaleX(1.0665);color:#a98a2a;-webkit-text-stroke:0.3px #a98a2a;">Assign Property/Le...</div>
<div class="t" style="left:2347.67px;top:1172.30px;font-size:23.77px;line-height:23.77px;font-weight:400;transform:scaleX(1.0811);color:#0d1b1a;-webkit-text-stroke:0.3px #0d1b1a;">-$6.33</div>
</body></html>
